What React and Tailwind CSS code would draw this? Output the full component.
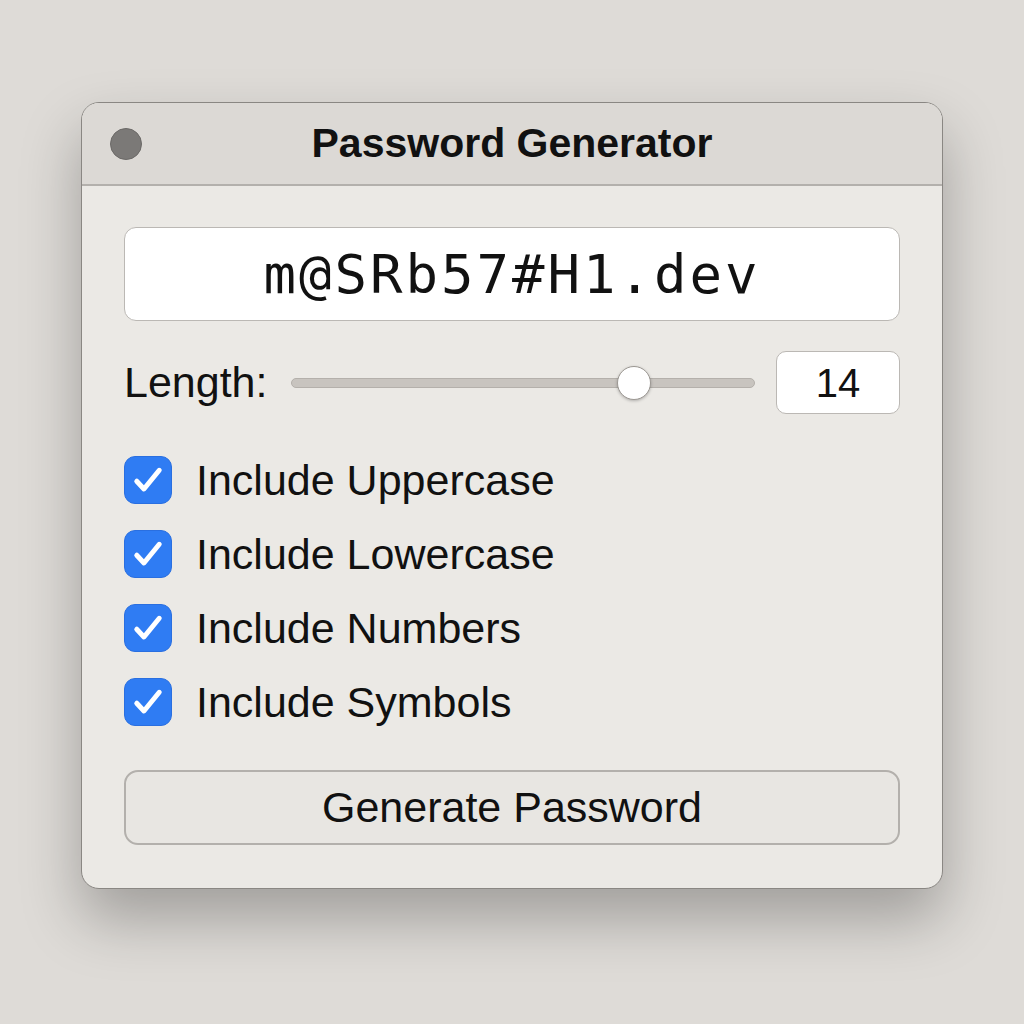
import { useState } from 'react'

const OPTIONS = [
  { key: 'upper', label: 'Include Uppercase' },
  { key: 'lower', label: 'Include Lowercase' },
  { key: 'numbers', label: 'Include Numbers' },
  { key: 'symbols', label: 'Include Symbols' },
]

function Checkbox({ checked, onChange }) {
  return (
    <button
      onClick={onChange}
      className={`w-[48px] h-[48px] rounded-[11px] flex items-center justify-center shrink-0 ${checked ? 'bg-[#2f7cf3] border border-[#2a6fe0]' : 'bg-white border border-[#b5b2ae]'}`}
    >
      {checked && (
        <svg width="36" height="36" viewBox="0 0 24 24" fill="none" stroke="white" strokeWidth="3.3" strokeLinecap="round" strokeLinejoin="round">
          <path d="M4.5 12.8l4.8 5.2L19.5 5.5" />
        </svg>
      )}
    </button>
  )
}

export default function App() {
  const [length, setLength] = useState(14)
  const [opts, setOpts] = useState({ upper: true, lower: true, numbers: true, symbols: true })
  const pct = 0.74

  return (
    <div className="w-full min-h-[1024px] bg-[#dedbd7] flex justify-center pt-[102px]" style={{ fontFamily: '"Liberation Sans", Arial, sans-serif' }}>
      <div className="w-[862px] h-[787px] rounded-[18px] border border-[#8a8783] bg-[#ebe9e5] overflow-hidden flex flex-col shadow-[0_30px_60px_rgba(0,0,0,0.28)]">
        {/* title bar */}
        <div className="h-[83px] shrink-0 bg-[#dcd9d5] border-b-2 border-[#b3b0ac] flex items-center px-[28px] relative">
          <div className="w-[32px] h-[32px] rounded-full bg-[#7b7977] border border-[#6b6967]" />
          <div className="absolute inset-0 flex items-center justify-center text-[41px] font-bold text-[#111]">
            Password Generator
          </div>
        </div>

        {/* body */}
        <div className="flex-1 flex flex-col px-[42px] pt-[41px] pb-[44px]">
          <div className="h-[94px] rounded-[12px] bg-white border border-[#bbb8b4] flex items-center justify-center text-[54px] tracking-[3px] text-[#111]" style={{ fontFamily: '"DejaVu Sans Mono", monospace' }}>
            m@SRb57#H1.dev
          </div>

          <div className="mt-[30px] h-[63px] flex items-center">
            <span className="text-[43px] text-[#111] leading-none">Length:</span>
            <div className="ml-[24px] flex-1 relative h-[34px] flex items-center">
              <div className="w-full h-[10px] rounded-full bg-[#c8c4bf] border border-[#b4b0ab]" />
              <div className="absolute w-[34px] h-[34px] rounded-full bg-white border border-[#9c9893] shadow-[0_1px_3px_rgba(0,0,0,0.25)]" style={{ left: `calc(${pct * 100}% - 17px)` }} />
            </div>
            <div className="ml-[21px] w-[124px] h-[63px] rounded-[10px] bg-white border border-[#bbb8b4] flex items-center justify-center text-[40px] text-[#111]">
              {length}
            </div>
          </div>

          <div className="mt-[42px] flex flex-col gap-[26px]">
            {OPTIONS.map(o => (
              <label key={o.key} className="flex items-center gap-[24px] h-[48px]">
                <Checkbox checked={opts[o.key]} onChange={() => setOpts(s => ({ ...s, [o.key]: !s[o.key] }))} />
                <span className="text-[43px] text-[#111] leading-none">{o.label}</span>
              </label>
            ))}
          </div>

          <button
            onClick={() => setLength(l => l)}
            className="mt-[44px] h-[75px] rounded-[14px] bg-[#e8e6e2] border-2 border-[#b3b0ac] text-[43px] text-[#111] flex items-center justify-center"
          >
            Generate Password
          </button>
        </div>
      </div>
    </div>
  )
}
